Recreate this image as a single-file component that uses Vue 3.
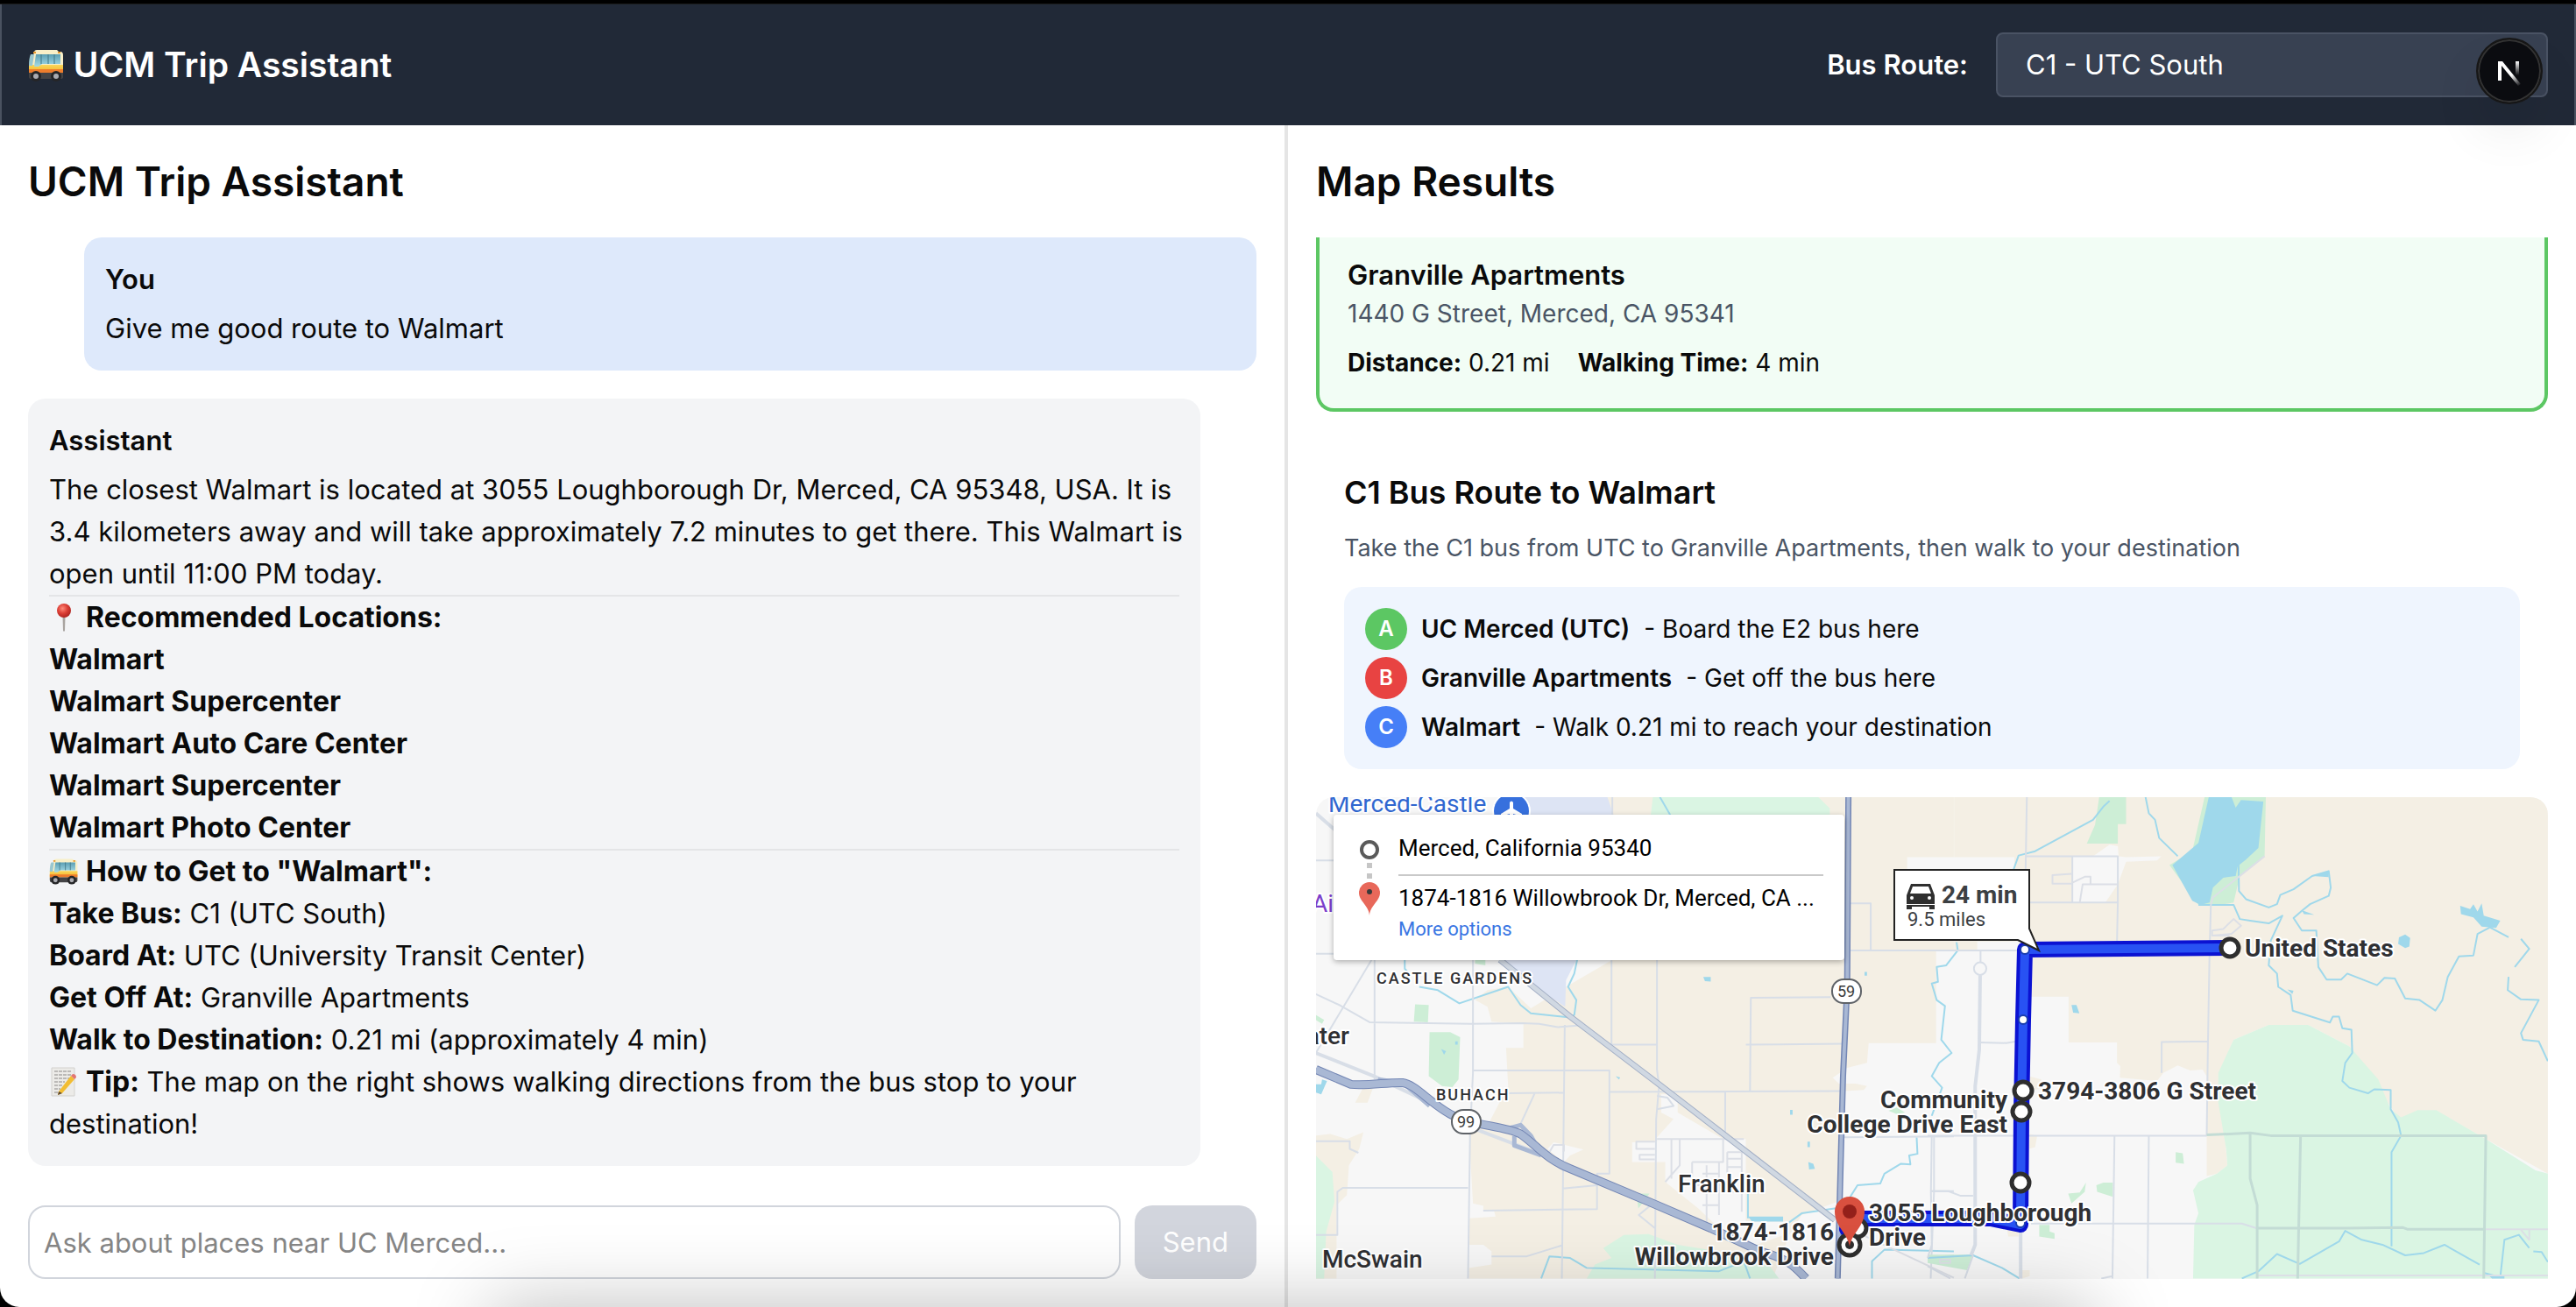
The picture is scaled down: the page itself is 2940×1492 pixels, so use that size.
<script setup>
import { ref } from 'vue'

const route = ref('c1')
const draft = ref('')

const locations = [
  'Walmart',
  'Walmart Supercenter',
  'Walmart Auto Care Center',
  'Walmart Supercenter',
  'Walmart Photo Center',
]

const directions = [
  { label: 'Take Bus:', value: 'C1 (UTC South)' },
  { label: 'Board At:', value: 'UTC (University Transit Center)' },
  { label: 'Get Off At:', value: 'Granville Apartments' },
  { label: 'Walk to Destination:', value: '0.21 mi (approximately 4 min)' },
]

const stops = [
  { mark: 'A', tone: 'green', name: 'UC Merced (UTC)', note: '- Board the E2 bus here' },
  { mark: 'B', tone: 'red', name: 'Granville Apartments', note: '- Get off the bus here' },
  { mark: 'C', tone: 'blue', name: 'Walmart', note: '- Walk 0.21 mi to reach your destination' },
]
</script>

<template>
  <div class="app">
    <svg class="symbols" aria-hidden="true">
      <defs>
        <linearGradient id="glass" x1="0" y1="0" x2="0" y2="1">
          <stop offset="0" stop-color="#5b9fb4" />
          <stop offset="1" stop-color="#a5dbe6" />
        </linearGradient>
        <linearGradient id="bus-side" x1="0" y1="0" x2="0" y2="1">
          <stop offset="0" stop-color="#f9d75a" />
          <stop offset="1" stop-color="#f7b42c" />
        </linearGradient>
        <radialGradient id="pin-head" cx=".4" cy=".35" r=".7">
          <stop offset="0" stop-color="#ff8a7a" />
          <stop offset=".5" stop-color="#dc3f36" />
          <stop offset="1" stop-color="#a81f1c" />
        </radialGradient>
      </defs>
      <symbol id="bus" viewBox="0 0 42 38">
        <path d="M7 4Q7 1 10 1H33L35 3H37Q40 3 40 7V30H1V22Z" fill="#f8efc8" />
        <path d="M1 18H40V26H1Z" fill="url(#bus-side)" />
        <path d="M1 23H40V27H1Z" fill="#ee7d2c" />
        <path d="M1 27H40V32Q40 34 37 34H3Q1 34 1 31Z" fill="#444446" />
        <path d="M3 6H7L5 19H1Q1 10 3 6Z" fill="#9ac7cf" />
        <path d="M9 6H37V17H16L12 20H7Z" fill="url(#glass)" />
        <path d="M15 6V17M23 6V17M30 6V17" stroke="#3f7684" stroke-width="1" />
        <path d="M6 4H9M34 4H37" stroke="#e99a2d" stroke-width="2" />
        <circle cx="9" cy="31" r="6" fill="#252527" />
        <circle cx="9" cy="31" r="3" fill="#aaabb1" />
        <circle cx="32" cy="31" r="6" fill="#252527" />
        <circle cx="32" cy="31" r="3" fill="#aaabb1" />
      </symbol>
      <symbol id="pushpin" viewBox="0 0 34 34">
        <path d="M15.500 15H18.500L18 32L17 33L16 32Z" fill="#a9a4a0" />
        <circle cx="17" cy="9" r="8" fill="url(#pin-head)" />
      </symbol>
      <symbol id="memo" viewBox="0 0 34 34">
        <path d="M3 1H29V33H3Z" fill="#ecebe8" stroke="#d2d1ce" />
        <path d="M6 5H26M6 9H25M6 13H24M6 17H18M6 21H15M6 25H13M6 29H12" stroke="#aaa9a7" stroke-width="1.500" stroke-dasharray="4 1" />
        <path d="M11 28L25 10L29 14L15 30L10 32Z" fill="#f2bd33" />
        <path d="M25 10L27 8Q31 8 31 12L29 14Z" fill="#e27672" />
        <path d="M11 28L15 30L10 32Z" fill="#5a4632" />
      </symbol>
    </svg>

    <header class="topbar">
      <h1 class="brand">
        <svg class="emoji emoji-lg" aria-hidden="true"><use href="#bus" /></svg>
        UCM Trip Assistant
      </h1>
      <div class="route-picker">
        <label for="route">Bus Route:</label>
        <select id="route" v-model="route">
          <option value="c1">C1 - UTC South</option>
        </select>
      </div>
    </header>

    <button class="dev-badge" type="button" aria-label="Open developer tools">
      <svg viewBox="0 0 76 76">
        <defs>
          <linearGradient id="n-stem" x1="0" y1="27" x2="0" y2="43" gradientUnits="userSpaceOnUse">
            <stop offset="0" stop-color="#fff" />
            <stop offset="1" stop-color="#fff" stop-opacity="0" />
          </linearGradient>
          <linearGradient id="n-diagonal" x1="38" y1="40" x2="50" y2="55" gradientUnits="userSpaceOnUse">
            <stop offset=".2" stop-color="#fff" />
            <stop offset="1" stop-color="#fff" stop-opacity="0" />
          </linearGradient>
        </defs>
        <path d="M25 49V27H30L51 53L48 55L29 32V49Z" fill="url(#n-diagonal)" />
        <path d="M45 27H49V43H45Z" fill="url(#n-stem)" />
      </svg>
    </button>

    <main class="columns">
      <section class="panel chat">
        <h2>UCM Trip Assistant</h2>

        <div class="messages">
          <article class="bubble from-user">
            <h3>You</h3>
            <p>Give me good route to Walmart</p>
          </article>

          <article class="bubble from-assistant">
            <h3>Assistant</h3>
            <p>
              The closest Walmart is located at 3055 Loughborough Dr, Merced, CA 95348, USA. It is 3.4
              kilometers away and will take approximately 7.2 minutes to get there. This Walmart is open
              until 11:00 PM today.
            </p>
            <hr />
            <p>
              <svg class="emoji" aria-hidden="true"><use href="#pushpin" /></svg>
              <strong>Recommended Locations:</strong>
            </p>
            <p v-for="(place, i) in locations" :key="i"><strong>{{ place }}</strong></p>
            <hr />
            <p>
              <svg class="emoji" aria-hidden="true"><use href="#bus" /></svg>
              <strong>How to Get to "Walmart":</strong>
            </p>
            <p v-for="step in directions" :key="step.label">
              <strong>{{ step.label }}</strong> {{ step.value }}
            </p>
            <p>
              <svg class="emoji" aria-hidden="true"><use href="#memo" /></svg>
              <strong>Tip:</strong> The map on the right shows walking directions from the bus stop to
              your destination!
            </p>
          </article>
        </div>

        <form class="composer" @submit.prevent>
          <input v-model="draft" type="text" aria-label="Message" placeholder="Ask about places near UC Merced..." />
          <button type="submit" :disabled="!draft">Send</button>
        </form>
      </section>

      <section class="panel results">
        <h2>Map Results</h2>

        <article class="stop-card">
          <h3>Granville Apartments</h3>
          <p class="muted">1440 G Street, Merced, CA 95341</p>
          <p class="facts">
            <span><strong>Distance:</strong> 0.21 mi</span>
            <span><strong>Walking Time:</strong> 4 min</span>
          </p>
        </article>

        <article class="route">
          <h3>C1 Bus Route to Walmart</h3>
          <p class="muted summary">Take the C1 bus from UTC to Granville Apartments, then walk to your destination</p>
          <ul class="stops">
            <li v-for="stop in stops" :key="stop.mark">
              <span class="mark" :class="stop.tone">{{ stop.mark }}</span>
              <strong>{{ stop.name }}</strong>
              <span>{{ stop.note }}</span>
            </li>
          </ul>
        </article>

        <div class="map">
          <svg class="map-canvas" viewBox="0 0 1406 550" role="img" aria-label="Driving route in Merced">
            <rect width="1406" height="550" fill="#f7f7f7" />

            <!-- western half: land, water and roads -->
            <g class="terrain" transform="translate(-12 -10) scale(.4719 .3775)">
              <path class="farm" d="M545 26H1568V208H1455V248H1568V490H1525V770H1362L1358 830L1310 845L1275 875L1290 893H1330L1358 900L1350 912L1300 915L1290 1250L1240 1280L1200 1290L1170 1350L1130 1482H395V1300L460 1295L455 1275L430 1278V1262L405 1255L395 1040L440 1020L490 900L485 785H527V712L450 705L440 660L410 640L440 610L490 600L545 665L630 600L740 520Z" />
              <path class="land" d="M395 1380H430L450 1400V1440L395 1450ZM790 1070H850V1055L890 1000L860 980V925H900V980L1010 1060H1065V1310H1170V1345L1090 1380L1000 1330L950 1270L870 1190V1130L790 1130ZM585 1090L600 1070L672 1092L640 1110L625 1130ZM1200 1290L1285 1250V1482H1210L1160 1420Z" />
              <path class="farm" d="M25 1050L60 1045L100 1060L140 1040L130 1090L105 1140L100 1230L75 1260V1482H25ZM120 950L150 880L165 900L150 950Z" />
              <path class="park" d="M840 26H1240L1268 60V80H835ZM25 1110L65 1160L70 1250L50 1340L45 1482H25ZM680 1482L700 1440L740 1420L720 1390L770 1350L830 1348L900 1380L1000 1400L1120 1440L1145 1482Z" />
              <path class="grove" d="M265 653L298 655L296 707L262 705ZM300 737H350L374 752L370 880L355 903L330 900L298 870ZM25 685L45 700L40 712L25 700ZM410 505H435V535L410 530ZM800 1225H832L805 1270ZM1410 975L1430 965L1450 980L1430 985ZM1505 1415L1568 1410V1435L1520 1432Z" />
              <path class="airfield" d="M510 26H730L745 80H500ZM480 519H655L630 580L628 660L540 590Z" />
              <path class="water" d="M962 570H980V584L966 583ZM1216 1130L1228 1135L1232 1150L1218 1152ZM328 788L340 795L335 805ZM362 765H368V775H362ZM750 870L761 874L758 880ZM1172 972H1178V987H1172ZM1214 1068H1220V1085H1214ZM1352 555H1358V566H1352ZM40 880L52 885L38 925L25 920V895H38ZM1070 1295H1155V1310H1080Z" />
              <path class="river" d="M857 26L882 80M657 518L650 560L635 600L655 640L650 685L635 692L545 680L520 655L490 600L372 650L320 610L275 600M240 518V545L250 560M1478 1055L1480 1105L1460 1110L1463 1137L1440 1135L1400 1165L1390 1195L1335 1200L1310 1250M1070 1300V1200M1150 1330L1200 1285L1290 1268M570 1482L590 1415L640 1420L680 1450L1000 1460L1060 1430L1075 1482M1370 1482V1430L1400 1395L1568 1400" />
              <path class="street" d="M25 218H70M25 500H70M167 518V880M405 518V860L398 1040L393 1482M25 622L85 657L155 707L400 712L525 710L565 712L610 722L670 716M160 518L25 800M405 853H735V920M627 715L620 1482M490 922L627 920M742 26V80M740 520V775H850M850 518V850L855 900L848 1000L845 1482M735 918L1300 915M1075 915L1077 633L1270 631M1065 775L1300 772M1015 915V1060M1310 490H1568M1317 348H1367V490M1300 1055L1568 1052M555 920L520 1015M25 1067H107V1090L128 1102M25 1350H77V1220L90 1208H393M430 1277L705 1272V1165H735V920M622 1210L705 1200M450 1415H535L620 1382M1520 1050V1220L1512 1482M1512 1218H1568M850 930L875 935L890 960L850 970M805 1250L845 1250L806 1290L845 1330" />
              <path class="lane" d="M850 1060H1060M845 1068H800V1090H845M845 1108H808V1122H845M885 1060V1180M905 1060V1140L870 1190M935 1130H1010V1060M935 1130V1200H1010M970 1140V1330M1000 1130V1290M1020 1100H1055V1280M1020 1120H1055M1020 1145H1055M960 1165H1000M960 1260H1000M1020 1100V1220H1055M590 1100L600 1078H625V1098M1330 1340L1568 1480" />
              <path class="street wide" d="M25 75L75 130M25 800L165 870L300 950L420 1035L620 1130" />
              <path class="trunk-edge" d="M470 518L640 690L850 890L1280 1305" />
              <path class="trunk-fill" d="M470 518L640 690L850 890L1280 1305" />
              <path class="ramp" d="M175 880L235 890L300 960M505 1050V1080L570 1110M485 1030L520 1018L545 1050L570 1105" />
              <path class="freeway-edge" d="M25 850L110 895C150 900 200 888 235 890C265 895 300 950 350 985C400 1020 480 1020 520 1045C560 1080 580 1120 640 1150L840 1255L980 1330L1100 1400C1160 1420 1180 1440 1210 1482" />
              <path class="freeway-fill" d="M25 850L110 895C150 900 200 888 235 890C265 895 300 950 350 985C400 1020 480 1020 520 1045C560 1080 580 1120 640 1150L840 1255L980 1330L1100 1400C1160 1420 1180 1440 1210 1482" />
              <path class="highway-edge" d="M1313 26L1310 600L1300 870L1295 1100L1287 1482" />
              <path class="highway-fill" d="M1313 26L1310 600L1300 870L1295 1100L1287 1482" />
            </g>

            <!-- eastern half: land, water and roads -->
            <g class="terrain" transform="translate(698 -10) scale(.4719 .3775)">
              <path class="farm" d="M64 26H1500V1165L1350 1060L1230 975H1185L1140 1000L1020 780L920 715H825L740 760L705 860L725 1140L700 1165L675 1172V870L665 850L635 853L605 838L570 860L555 885L465 875L466 840L458 830V768H341V630H250V463H120V490H64V248H210V208H64ZM245 870L275 880L270 910H245ZM248 1045L265 1050L260 1085L245 1090ZM190 1320H220V1355H195ZM228 1457H247V1475L228 1482Z" />
              <path class="land" d="M350 205H400L440 170L460 175L462 205L480 208L565 205L555 218L480 222L460 290L430 345H350Z" />
              <path class="grove" d="M415 26H480V108H460V167H385L405 110ZM670 26H818L815 205L755 265L740 345L700 354L655 352L585 232L640 190ZM600 1100L617 1103L620 1135L600 1132ZM408 1200L425 1192H448V1235L410 1220ZM340 1225L368 1222L383 1192L380 1220L348 1255ZM270 1320H295V1340L307 1345V1362L270 1355ZM0 1410H110L95 1457L0 1435Z" />
              <path class="park" d="M825 715H920L1020 780L1090 880L1120 970L1145 995L1185 973H1230L1350 1060L1470 1155L1500 1165V1482H642L645 1320L655 1285L642 1215L655 1190L700 1165L725 1140L722 1090L703 950V860L740 760Z" />
              <path class="water" d="M680 26H735L745 58L758 35L812 40L800 180L770 215L750 235L745 265L715 270L690 300L682 345L660 352L640 340L592 232L655 165ZM930 265L970 250V268ZM905 368L935 382L910 380ZM1288 355L1312 365L1320 350L1330 372L1340 348L1345 385L1385 400L1375 422L1340 418L1320 390L1290 380ZM1140 450L1155 442L1167 452L1165 478L1155 483L1138 470ZM348 655H360L367 680L352 678ZM870 608L885 612L882 622ZM1355 1470H1395V1482H1365Z" />
              <path class="river" d="M440 38L425 55L400 95L260 190L220 203L208 245M527 26L535 75L550 95L560 150L605 205M752 230L753 310L770 335L825 360L845 350L853 322L885 305L930 265L970 250L975 300L970 325L925 350L905 370L885 392L905 430L940 430L945 540L965 578L1000 578L1015 560L1087 595L1105 573L1130 575L1155 635L1190 640L1228 672L1245 640L1258 570L1285 508L1320 505L1330 440L1360 420L1405 450M655 352H740L755 395L780 400L825 408L858 385L830 460L825 535L845 560L848 600L878 625L883 672L973 708L980 690H995L1003 725L1025 730L1027 800L1010 830L1003 885L1020 905L1065 922L1080 910L1120 912V970L1138 1010L1145 1050L1122 1100V1385M1435 455L1455 485L1420 540M1405 570L1403 610L1435 638L1478 640L1435 740L1440 760L1478 765L1500 825M760 1482L800 1460L845 1408L900 1438L995 1370L1010 1338L1050 1365L1100 1380L1155 1412L1200 1405L1250 1380L1335 1440M1345 1465L1385 1478L1395 1365L1430 1350L1455 1390M1465 1400L1485 1402L1500 1432M70 465L73 490L45 535L22 540L25 585L10 590L22 640L42 658L33 760L58 800L28 830L10 870L35 905L10 990M0 1420L110 1412L180 1450L222 1482" />
              <path class="street" d="M240 26L237 245M0 490H220M237 205H460V345H245M350 205V345M460 345L458 465M128 490V525M125 768L190 770L215 765M566 860V767L678 765M685 352L682 490L678 770L675 1050M0 1050H675M452 1050L447 1482M535 1050L532 1482M250 1316H760L795 1330M10 1050L8 1220L10 1380L0 1420M10 1218H50L80 1232H110M0 1445L55 1482M110 1412L90 1482M447 1475L420 1482" />
              <path class="lane" d="M348 258L302 262V288H348M350 285L380 267H394V290H460M394 290H375L368 345M688 445V430L715 425L740 395L758 415L735 440L688 445H730M815 205L690 330L685 352M1345 1333H1500M1435 1335L1455 1365V1335M795 1473H1500M30 1425H55V1435H30Z" />
              <path class="street wide" d="M127 565L125 790L115 900V1380L105 1412M225 1340V1482" />
              <ellipse class="street" cx="127" cy="545" rx="15" ry="19" />
              <path class="park-road" d="M675 1048L780 1042L830 1050H1350L1345 1482M780 1042V1180L797 1260V1482M902 1050L895 1482M800 1330H1010L1150 1328L1160 1333H1345" />
            </g>

            <!-- driving route -->
            <path class="route-edge" d="M1041 172L809 174L807 254L805 359L804 488L770 481H612L606 493" />
            <path class="route-fill" d="M1041 172L809 174L807 254L805 359L804 488L770 481H612L606 493" />
            <g class="route-dot">
              <circle cx="809" cy="174" r="5" />
              <circle cx="807" cy="254" r="5" />
              <circle cx="804" cy="486" r="5" />
            </g>
            <g class="waypoint">
              <circle cx="1043" cy="172" r="10" />
              <circle cx="807" cy="335" r="10" />
              <circle cx="805" cy="359" r="10" />
              <circle cx="804" cy="440" r="10" />
              <circle cx="618" cy="492" r="10" />
              <circle cx="609" cy="511" r="12" />
            </g>
            <circle cx="609" cy="511" r="5" fill="#2e2e2e" />

            <g class="shield">
              <rect x="589" y="208" width="33" height="27" rx="13" />
              <text x="605" y="228">59</text>
              <rect x="155" y="357" width="33" height="27" rx="13" />
              <text x="171" y="377">99</text>
            </g>

            <g class="label">
              <text class="airport" x="14" y="17">Merced-Castle</text>
              <text class="museum" x="-5" y="131">Air</text>
              <text class="district" x="69" y="213">CASTLE GARDENS</text>
              <text class="district" x="137" y="346">BUHACH</text>
              <text class="town" x="38" y="282" text-anchor="end">Atwater</text>
              <text class="town" x="413" y="451">Franklin</text>
              <text class="town" x="7" y="537">McSwain</text>
              <text x="1060" y="182">United States</text>
              <text x="824" y="345">3794-3806 G Street</text>
              <text x="789" y="355" text-anchor="end">Community</text>
              <text x="789" y="383" text-anchor="end">College Drive East</text>
              <text x="631" y="484">3055 Loughborough</text>
              <text x="631" y="512">Drive</text>
              <text x="591" y="506" text-anchor="end">1874-1816</text>
              <text x="591" y="534" text-anchor="end">Willowbrook Drive</text>
            </g>

            <g>
              <circle cx="223" cy="16" r="22" fill="#fff" />
              <circle cx="223" cy="16" r="20" fill="#3770dd" />
              <path d="M221 6Q223 3 225 6V13L235 19V22L225 19V27H221V19L211 22V19L221 13Z" fill="#fff" />
            </g>

            <path d="M609 513C607 498 592 490 592 473A17 17 0 0 1 626 473C626 490 611 498 609 513Z" fill="#d9503f" />
            <circle cx="609" cy="473" r="8" fill="#94201a" />

            <path class="callout" d="M660 83H814V150L825 175L801 163H660Z" />
            <g fill="#2f2f2f">
              <path d="M679 99H701L706 112V122H674V112ZM681 102L678 110H702L699 102Z" fill-rule="evenodd" />
              <path d="M674 123H706V125H674ZM674 125H680V128H674ZM700 125H706V128H700Z" />
            </g>
            <circle cx="680" cy="115" r="2" fill="#fff" />
            <circle cx="700" cy="115" r="2" fill="#fff" />
            <text class="duration" x="714" y="121">24 min</text>
            <text class="miles" x="675" y="147">9.5 miles</text>
          </svg>

          <aside class="trip">
            <svg viewBox="0 0 26 100" aria-hidden="true">
              <circle cx="13" cy="22" r="9" fill="#fff" stroke="#5a5a5a" stroke-width="4" />
              <path d="M10 37H16V43H10ZM10 49H16V55H10Z" fill="#c6c6c6" />
              <path d="M13 97C12 85 1 81 1 71A12 12 0 0 1 25 71C25 81 14 85 13 97Z" fill="#e8685a" />
              <circle cx="13" cy="70" r="3" fill="#3a3a3a" />
            </svg>
            <div class="trip-text">
              <p class="origin">Merced, California 95340</p>
              <p>1874-1816 Willowbrook Dr, Merced, CA ...</p>
              <a href="#">More options</a>
            </div>
          </aside>
        </div>
      </section>
    </main>

    <div class="dock-shade" aria-hidden="true"></div>
  </div>
</template>

<style>
html {
  background: #000;
}
</style>

<style scoped>
.app {
  position: relative;
  display: flex;
  flex-direction: column;
  box-sizing: border-box;
  min-height: 100vh;
  padding-top: 5px;
  overflow: hidden;
  border-radius: 0 0 22px 22px;
  background: linear-gradient(#000 4px, #1a1a1a 4px, #1a1a1a 5px, #fff 5px);
  color: #0a0a0a;
  font-family: Inter, "Liberation Sans", sans-serif;
  font-size: 31px;
  line-height: 48px;
}

h1,
h2,
h3,
p,
ul {
  margin: 0;
  padding: 0;
}

.symbols {
  position: absolute;
  width: 0;
  height: 0;
}

.emoji {
  width: 34px;
  height: 34px;
  vertical-align: -6px;
}

.emoji-lg {
  width: 42px;
  height: 42px;
  vertical-align: -8px;
}

.topbar {
  display: flex;
  align-items: center;
  justify-content: space-between;
  padding: 32px 30px;
  border: solid #4a5260;
  border-width: 0 2px;
  background: #212937;
  color: #fff;
}

.brand {
  font-size: 39px;
  font-weight: 600;
  line-height: 56px;
}

.route-picker {
  display: flex;
  align-items: center;
  gap: 32px;
}

.route-picker label {
  font-weight: 600;
}

.route-picker select {
  width: 630px;
  height: 74px;
  padding: 0 32px;
  border: 2px solid #4a5364;
  border-radius: 8px;
  appearance: none;
  background: #384152;
  color: #fff;
  font: inherit;
}

.dev-badge {
  position: absolute;
  z-index: 2;
  top: 43px;
  right: 38px;
  width: 76px;
  height: 76px;
  padding: 0;
  border: 2px solid #171717;
  border-radius: 50%;
  background: #0b0c10;
  box-shadow: inset 0 0 0 2px #333, 0 32px 64px -8px rgba(0, 0, 0, 0.12);
}

.dev-badge svg {
  display: block;
  width: 76px;
  height: 76px;
  margin: -2px;
}

.columns {
  display: grid;
  flex: 1;
  grid-template-columns: 1fr 1fr;
}

.panel {
  display: flex;
  flex-direction: column;
  min-width: 0;
  padding: 32px;
}

.chat {
  border-right: 4px solid #e5e5e5;
}

h2 {
  margin-bottom: 32px;
  font-size: 46px;
  font-weight: 600;
  line-height: 64px;
}

.messages {
  display: flex;
  flex: 1;
  flex-direction: column;
  gap: 32px;
}

.bubble {
  padding: 24px;
  border-radius: 20px;
}

.bubble h3 {
  margin-bottom: 8px;
  font-size: 31px;
  font-weight: 600;
}

.bubble p {
  margin-right: -8px;
}

.bubble .emoji {
  margin-right: 8px;
}

.bubble strong {
  font-size: 32px;
  line-height: 32px;
}

.from-user {
  margin-left: 64px;
  background: #dee9fb;
}

.from-assistant {
  margin-right: 64px;
  background: #f3f4f6;
}

hr {
  height: 2px;
  margin: 0;
  border: 0;
  background: #e4e5e7;
}

strong {
  font-weight: 700;
}

.composer {
  display: flex;
  gap: 16px;
  margin-top: 44px;
}

.composer input {
  flex: 1;
  box-sizing: border-box;
  min-width: 0;
  height: 84px;
  padding: 0 16px;
  border: 2px solid #d1d5dc;
  border-radius: 20px;
  background: #fff;
  color: inherit;
  font: inherit;
}

.composer input::placeholder {
  color: #858585;
  opacity: 1;
}

.composer button {
  height: 84px;
  padding: 0 32px;
  border: 0;
  border-radius: 20px;
  background: #d2d5dd;
  color: #fff;
  font: inherit;
}

.stop-card {
  padding: 19px 32px 32px;
  border: solid #5cc763;
  border-width: 0 4px 4px;
  border-radius: 0 0 20px 20px;
  background: #f2fdf5;
}

.stop-card h3 {
  font-size: 31px;
  font-weight: 600;
}

.stop-card p,
.route p,
.stops {
  font-size: 28px;
  line-height: 40px;
}

.route .summary {
  font-size: 27px;
}

.muted {
  color: #4a5565;
}

.facts {
  display: flex;
  gap: 32px;
  margin-top: 16px;
}

.route {
  margin: 32px 0;
  padding: 32px 32px 0;
  border-radius: 20px;
}

.route h3 {
  margin-bottom: 16px;
  font-size: 36px;
  font-weight: 600;
  line-height: 56px;
}

.stops {
  display: flex;
  flex-direction: column;
  gap: 8px;
  margin-top: 24px;
  padding: 24px;
  border-radius: 20px;
  background: #eff5fe;
  list-style: none;
}

.stops li {
  display: flex;
  align-items: center;
  gap: 16px;
}

.stops strong {
  font-weight: 600;
}

.mark {
  display: grid;
  place-items: center;
  width: 48px;
  height: 48px;
  border-radius: 50%;
  color: #fff;
  font-size: 24px;
  font-weight: 600;
  line-height: 32px;
}

.green {
  background: #5cc763;
}

.red {
  background: #e84342;
}

.blue {
  background: #467ff7;
}

.map {
  position: relative;
  overflow: hidden;
  border-radius: 20px 20px 0 0;
  font-family: Roboto, "Liberation Sans", sans-serif;
}

.map-canvas {
  display: block;
  width: 100%;
}

.terrain * {
  vector-effect: non-scaling-stroke;
}

.land { fill: #f7f7f7; }
.farm { fill: #f4efe4; }
.park { fill: #daf5e3; }
.grove { fill: #cdeed6; }
.airfield { fill: #dde4f4; }
.water { fill: #9fd8eb; }

.river,
.street,
.lane,
.park-road,
.trunk-edge,
.trunk-fill,
.ramp,
.freeway-edge,
.freeway-fill,
.highway-edge,
.highway-fill,
.route-edge,
.route-fill {
  fill: none;
  stroke-linejoin: round;
}

.river { stroke: #9fd8eb; stroke-width: 2px; }
.street { stroke: #d8dee7; stroke-width: 2px; }
.lane { stroke: #dcdfe6; stroke-width: 2px; }
.wide { stroke-width: 4px; }
.park-road { stroke: #c3dcd5; stroke-width: 3px; }
.trunk-edge { stroke: #a4b0c6; stroke-width: 7px; }
.trunk-fill { stroke: #d0d8e2; stroke-width: 5px; }
.ramp { stroke: #a9b8d4; stroke-width: 5px; }
.freeway-edge { stroke: #7386b4; stroke-width: 10px; }
.freeway-fill { stroke: #a9b8d4; stroke-width: 8px; }
.highway-edge { stroke: #7386b4; stroke-width: 7px; }
.highway-fill { stroke: #a9b8d4; stroke-width: 4px; }
.route-edge { stroke: #0b12d2; stroke-width: 18px; stroke-linecap: round; }
.route-fill { stroke: #2852f3; stroke-width: 10px; stroke-linecap: round; }

.route-dot circle {
  fill: #fff;
  stroke: #1b3fae;
  stroke-width: 2px;
}

.waypoint circle {
  fill: #fff;
  stroke: #2e2e2e;
  stroke-width: 5px;
}

.shield rect {
  fill: #fff;
  stroke: #5f6368;
  stroke-width: 2px;
}

.shield text {
  fill: #3a3a3a;
  font-size: 18px;
  text-anchor: middle;
}

.label text {
  fill: #2f3033;
  stroke: #fff;
  stroke-width: 4px;
  stroke-linejoin: round;
  paint-order: stroke;
  font-size: 28px;
  font-weight: 700;
}

.label .town {
  font-weight: 500;
}

.label .airport {
  fill: #3067d0;
  font-weight: 400;
}

.label .museum {
  fill: #7c3fca;
  font-weight: 400;
}

.label .district {
  font-size: 18px;
  font-weight: 500;
  letter-spacing: 2px;
}

.callout {
  fill: #fff;
  stroke: #222;
  stroke-width: 2px;
}

.duration {
  fill: #3c4043;
  font-size: 28px;
  font-weight: 700;
}

.miles {
  fill: #3c4043;
  font-size: 22px;
}

.trip {
  position: absolute;
  top: 20px;
  left: 20px;
  display: flex;
  gap: 20px;
  box-sizing: border-box;
  width: 583px;
  height: 166px;
  padding: 18px 24px 0 28px;
  border-radius: 4px;
  background: #fff;
  box-shadow: 0 2px 6px rgba(0, 0, 0, 0.3);
  color: #000;
  font-size: 26px;
  line-height: 40px;
}

.trip svg {
  flex: none;
  width: 26px;
  height: 100px;
}

.trip-text {
  flex: 1;
  min-width: 0;
}

.trip p {
  overflow: hidden;
  white-space: nowrap;
  text-overflow: ellipsis;
}

.trip .origin {
  height: 50px;
  margin-bottom: 5px;
  border-bottom: 2px solid #c9c9c9;
}

.trip a {
  display: block;
  color: #3a76e3;
  font-size: 22px;
  line-height: 32px;
  text-decoration: none;
}

.dock-shade {
  position: absolute;
  top: 100%;
  right: 550px;
  left: 560px;
  height: 200px;
  box-shadow: 0 0 90px rgba(0, 0, 0, 0.26);
  pointer-events: none;
}
</style>
